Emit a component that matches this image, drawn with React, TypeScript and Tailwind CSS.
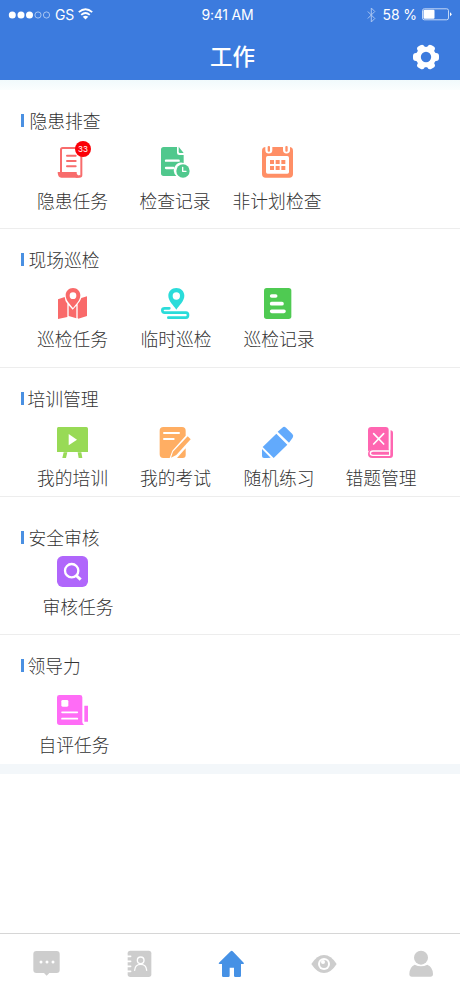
import type { ReactNode } from "react";

type IconProps = { box: string; color: string; children: ReactNode };

function Icon({ box, color, children }: IconProps) {
  return (
    <svg width="36" height="36" viewBox={box} fill={color} className="block shrink-0">
      {children}
    </svg>
  );
}

const round = { fill: "none", strokeLinecap: "round", strokeLinejoin: "round" } as const;

const scroll = (
  <Icon box="162 147 108 108" color="#f86c6c">
    <path {...round} stroke="#f86c6c" strokeWidth="6" d="M183 233V164q0-5 5-5h51q5 0 5 5v76q0 5-5 5h-10" />
    <path d="M173 231h57q-1 7 4 10 4 1 7-2-1 9-9 9h-48q-11 0-11-17z" />
    <path {...round} stroke="#f86c6c" strokeWidth="6" d="M201 182h26M201 198h26M201 214h26" />
  </Icon>
);

const fileClock = (
  <Icon box="471 147 108 108" color="#50c88d">
    <path d="M491 156h40v17q0 7 7 7h13v24a23 23 0 0 0-22 39h-38q-8 0-8-8v-71q0-8 8-8z" />
    <path d="M536 155l15 19h-11q-4 0-4-4z" />
    <path {...round} stroke="#fff" strokeWidth="7" d="M498 197h38M498 219h22" />
    <circle cx="549" cy="228" r="20" />
    <path {...round} stroke="#fff" strokeWidth="4" d="M548 217v12h10" />
  </Icon>
);

const calendar = (
  <Icon box="90 147 108 108" color="#ff8f66">
    <rect x="96" y="156" width="93" height="92" rx="11" />
    <path fill="#fff" d="M106 154h21v11a10.500 10.500 0 0 1-21 0zM159 154h21v11a10.500 10.500 0 0 1-21 0z" />
    <rect x="113" y="153" width="7" height="17" rx="3" />
    <rect x="166" y="153" width="7" height="17" rx="3" />
    <rect x="108" y="183" width="69" height="53" rx="5" fill="#fff" />
    <path d="M120 195h12v12h-12zM137 195h12v12h-12zM154 195h12v12h-12zM120 213h12v12h-12zM137 213h12v12h-12zM154 213h12v12h-12z" />
  </Icon>
);

const mapPin = (
  <Icon box="162 153 108 108" color="#f96a6a">
    <path d="M174 193l20-7q1 13 8 20v40l-28 6zM206 211l12 13 11-12v38l-23-7zM233 207q9-10 11-18l17-5v59l-26 8-2-2z" />
    <path fillRule="evenodd" d="M219 159c-13 0-22 10-22 22 0 16 14 28 22 38 8-10 22-22 22-38 0-12-9-22-22-22zm0 13a10 10 0 1 1 0 20 10 10 0 0 1 0-20z" />
  </Icon>
);

const route = (
  <Icon box="471 153 108 108" color="#2bdcda">
    <path fillRule="evenodd" d="M529 159c-14 0-24 10-24 23 0 16 16 29 24 42 8-13 24-26 24-42 0-13-10-23-24-23zm0 13a11 11 0 1 1 0 22 11 11 0 0 1 0-22z" />
    <path {...round} stroke="#2bdcda" strokeWidth="8" d="M508 220h-14q-7 0-7 6 0 7 7 7h64q6 0 6 7 0 8-6 8h-53" />
  </Icon>
);

const report = (
  <Icon box="90 153 108 108" color="#4fca52">
    <rect x="102" y="159" width="82" height="93" rx="8" />
    <path {...round} stroke="#fff" strokeWidth="11" d="M125 183h12M125 206h31M125 229h37" />
  </Icon>
);

const board = (
  <Icon box="162 147 108 108" color="#98da56">
    <path d="M175 156h84q5 0 5 5v70h-93v-70q0-5 4-5zM191 232h11l-4 17h-11zM233 232h11l3 17h-11z" />
    <path fill="#fff" d="M206 177l25 17-25 17z" />
  </Icon>
);

const exam = (
  <Icon box="471 147 108 108" color="#ffae63">
    <path d="M490 156h56q11 0 11 11v15l-40 45-8 22h-19q-11 0-11-11v-71q0-11 11-11z" />
    <path {...round} stroke="#fff" strokeWidth="6" d="M492 174h45M492 192h29" />
    <path d="M563 184l9 9-43 47-16 8 6-18z" />
    <path d="M557 220v20q0 9-9 9h-17z" />
  </Icon>
);

const pencil = (
  <Icon box="90 147 108 108" color="#62aafc">
    <path d="M96 222l26 26q-11 1-20 1-6 0-6-6zM139 176l33 33-41 40-33-33zM157 158q5-5 11 0l19 19q5 5 1 11l-11 15-34-33z" />
  </Icon>
);

const wrongBook = (
  <Icon box="399 147 108 108" color="#ff66b1">
    <path d="M424 156h43q9 0 9 9v59h-51q-7 0-11 5v-63q0-10 10-10zM481 166q8 0 8 8v66q0 9-9 9h-53q-13 0-13-12 0-13 13-13h54z" />
    <path {...round} stroke="#fff" strokeWidth="4" d="M479 166v62h-50q-8 0-8 7 0 6 8 6h50v-13" />
    <path {...round} stroke="#fff" strokeWidth="5" d="M431 176l30 31M461 176l-30 31" />
  </Icon>
);

const audit = (
  <Icon box="162 117 108 108" color="#b066fb">
    <rect x="171" y="123" width="93" height="93" rx="17" />
    <circle cx="215" cy="167" r="20" fill="none" stroke="#fff" strokeWidth="7" />
    <path fill="none" stroke="#fff" strokeWidth="9" d="M227 180l15 14" />
  </Icon>
);

const selfReview = (
  <Icon box="162 141 108 108" color="#ff6cf6">
    <path d="M178 150h62q7 0 7 7v74q0 5 5 9h-73q-8 0-8-8v-75q0-7 7-7zM253 182h11v48h-11z" />
    <rect x="184" y="165" width="21" height="20" rx="4" fill="#fff" />
    <path {...round} stroke="#fff" strokeWidth="5" d="M186 202h46M186 221h46" />
  </Icon>
);

type Item = { label: string; icon: ReactNode; badge?: string; shift?: string };
type Group = {
  title: string;
  section: string;
  titleGap: string;
  row: string;
  labelGap: string;
  items: Item[];
};

const groups: Group[] = [
  {
    title: "隐患排查",
    section: "h-[139px] pt-[20px] border-b",
    titleGap: "gap-[6px]",
    row: "mt-[10px]",
    labelGap: "mt-[10px]",
    items: [
      { label: "隐患任务", icon: scroll, badge: "33", shift: "ml-px" },
      { label: "检查记录", icon: fileClock },
      { label: "非计划检查", icon: calendar, shift: "-ml-[2px]" },
    ],
  },
  {
    title: "现场巡检",
    section: "h-[139px] pt-[20px] border-b",
    titleGap: "gap-[5px]",
    row: "mt-[13px]",
    labelGap: "mt-[6px]",
    items: [
      { label: "巡检任务", icon: mapPin, shift: "ml-px" },
      { label: "临时巡检", icon: route, shift: "ml-[2px]" },
      { label: "巡检记录", icon: report, shift: "ml-[2px]" },
    ],
  },
  {
    title: "培训管理",
    section: "h-[129px] pt-[20px] border-b",
    titleGap: "gap-[4px]",
    row: "mt-[12px]",
    labelGap: "mt-[7px]",
    items: [
      { label: "我的培训", icon: board, shift: "ml-px" },
      { label: "我的考试", icon: exam, shift: "ml-px" },
      { label: "随机练习", icon: pencil, shift: "ml-[2px]" },
      { label: "错题管理", icon: wrongBook },
    ],
  },
  {
    title: "安全审核",
    section: "h-[138px] pt-[30px] border-b",
    titleGap: "gap-[5px]",
    row: "mt-[3px]",
    labelGap: "mt-[6px]",
    items: [{ label: "审核任务", icon: audit, shift: "ml-[12px]" }],
  },
  {
    title: "领导力",
    section: "h-[129px] pt-[20px]",
    titleGap: "gap-[4px]",
    row: "mt-[13px]",
    labelGap: "mt-[6px]",
    items: [{ label: "自评任务", icon: selfReview, shift: "ml-[4px]" }],
  },
];

function GroupSection({ group }: { group: Group }) {
  return (
    <section className={`${group.section} border-[#ededed]`}>
      <h2 className={`flex h-6 items-center pl-[21px] text-[17.8px] leading-6 font-light ${group.titleGap}`}>
        <span className="mb-[4px] h-[13px] w-[2.500px] bg-[#4a90e2]" />
        {group.title}
      </h2>
      <div className={`flex gap-px pl-[21px] ${group.row}`}>
        {group.items.map((item) => (
          <div key={item.label} className="flex w-[102px] flex-col items-center">
            <div className="relative">
              {item.icon}
              {item.badge && (
                <span className="absolute top-[-3px] left-[21px] flex h-4 w-4 items-center justify-center rounded-full bg-[#fb0007] text-[8px] text-white">
                  {item.badge}
                </span>
              )}
            </div>
            <span
              className={`text-[17.8px] leading-6 font-light whitespace-nowrap ${group.labelGap} ${item.shift ?? ""}`}
            >
              {item.label}
            </span>
          </div>
        ))}
      </div>
    </section>
  );
}

function StatusBar() {
  return (
    <div className="flex h-[29px] items-center px-[8px] text-[14px] tracking-[-0.2px]">
      <div className="flex flex-1 items-center">
        <svg width="43" height="10" viewBox="0 0 43 10" fill="#fff">
          <circle cx="4.300" cy="5" r="3.500" />
          <circle cx="13" cy="5" r="3.500" />
          <circle cx="21.500" cy="5" r="3.500" />
          <circle cx="30" cy="5" r="3.100" fill="none" stroke="#c3d8f6" strokeWidth="0.8" />
          <circle cx="38.500" cy="5" r="3.100" fill="none" stroke="#c3d8f6" strokeWidth="0.8" />
        </svg>
        <span className="ml-[4px]">GS</span>
        <svg className="mb-px ml-[4px]" width="15" height="12" viewBox="0 0 15 12" fill="none" stroke="#fff" strokeWidth="1.800">
          <path d="M.8 4.200Q7.500-1.800 14.200 4.200M3.200 6.900Q7.500 3.200 11.800 6.900" />
          <path fill="#fff" stroke="none" d="M4.700 8.700Q7.500 6.700 10.300 8.700L7.500 11.500z" />
        </svg>
      </div>
      <span className="mr-[5px]">9:41 AM</span>
      <div className="flex flex-1 items-center justify-end">
        <svg width="9" height="16" viewBox="0 0 9 16" fill="none" stroke="#a9c5f1" strokeWidth="1">
          <path d="M.8 4.500l7 7-3.500 3.500V1l3.500 3.500-7 7" />
        </svg>
        <span className="ml-[7px] tracking-[-0.1px]">58 %</span>
        <svg className="ml-[5px]" width="30" height="13" viewBox="0 0 30 13" fill="none">
          <rect x=".5" y=".8" width="26" height="11" rx="1.800" stroke="#c3d8f6" />
          <rect x="1.500" y="1.800" width="11" height="9" rx="1" fill="#fff" />
          <path d="M28 4.300q3 2 0 4z" fill="#fff" />
        </svg>
      </div>
    </div>
  );
}

function TabBar() {
  return (
    <nav className="mt-auto flex h-[63px] items-start gap-[57px] border-t border-[#d6d6d6] bg-white pt-[12px] pl-[28px]">
      <Icon box="84 63 108 108" color="#cdcdcd">
        <path d="M109 78h61q9 0 9 9v48q0 9-9 9h-22l-8 8-8-8h-23q-9 0-9-9V87q0-9 9-9z" />
        <g fill="#fff">
          <circle cx="123" cy="111" r="4.500" />
          <circle cx="141" cy="111" r="4.500" />
          <circle cx="159" cy="111" r="4.500" />
        </g>
      </Icon>
      <Icon box="363 63 108 108" color="#cdcdcd">
        <rect x="383" y="77" width="71" height="79" rx="8" />
        <path {...round} stroke="#fff" strokeWidth="5" d="M380 94h12M380 109h12M380 124h12M380 139h12" />
        <g {...round} stroke="#fff" strokeWidth="4">
          <circle cx="422" cy="106" r="10" />
          <path d="M404 136q1-18 18-18t18 18" />
        </g>
      </Icon>
      <Icon box="-48 63 108 108" color="#4691e5">
        <path d="M2 79q3-3 6 0l33 34q3 4-2 4h-6v35q0 4-4 4H16q-4 0-4-4v-24h-13v24q0 4-4 4h-15q-4 0-4-4v-35h-7q-5 0-2-4z" />
      </Icon>
      <Icon box="231 63 108 108" color="#cdcdcd">
        <path d="M244 117q17-27 38-27t38 27q-17 27-38 27t-38-27z" />
        <circle cx="282" cy="117" r="18" fill="#fff" />
        <circle cx="282" cy="117" r="12" />
        <circle cx="279" cy="111" r="6" fill="#fff" />
      </Icon>
      <div className="ml-[3px]">
        <Icon box="519 63 108 108" color="#cdcdcd">
          <circle cx="573" cy="98" r="21" />
          <path d="M554 119q19 9 38 0 17 8 17 28 0 8-8 8h-55q-8 0-8-8 0-20 16-28z" />
        </Icon>
      </div>
    </nav>
  );
}

export default function App() {
  return (
    <div className="flex h-[996px] w-[460px] flex-col overflow-hidden bg-white font-['Inter','Noto_Sans_CJK_SC',sans-serif] text-[#333]">
      <header className="h-20 bg-[#3c7bde] text-white">
        <StatusBar />
        <div className="flex h-[51px] items-center pr-[20px] pl-[53px]">
          <h1 className="mt-[5px] flex-1 text-center text-[22.500px] leading-8 font-medium">工作</h1>
          <svg className="mt-[4px]" width="28" height="28" viewBox="546 128 84 84" fill="#fff">
            <circle cx="588" cy="170" r="31" />
            <rect x="549" y="158" width="78" height="24" rx="9" />
            <rect x="549" y="158" width="78" height="24" rx="9" transform="rotate(60 588 170)" />
            <rect x="549" y="158" width="78" height="24" rx="9" transform="rotate(120 588 170)" />
            <circle cx="588" cy="170" r="15.500" fill="#3c7bde" />
          </svg>
        </div>
      </header>
      <div className="h-[10px] bg-gradient-to-b from-[#f1fafc] to-[#fbfefe]" />
      <main>
        {groups.map((group) => (
          <GroupSection key={group.title} group={group} />
        ))}
      </main>
      <div className="h-[10px] bg-[#f3f7fa]" />
      <TabBar />
    </div>
  );
}
